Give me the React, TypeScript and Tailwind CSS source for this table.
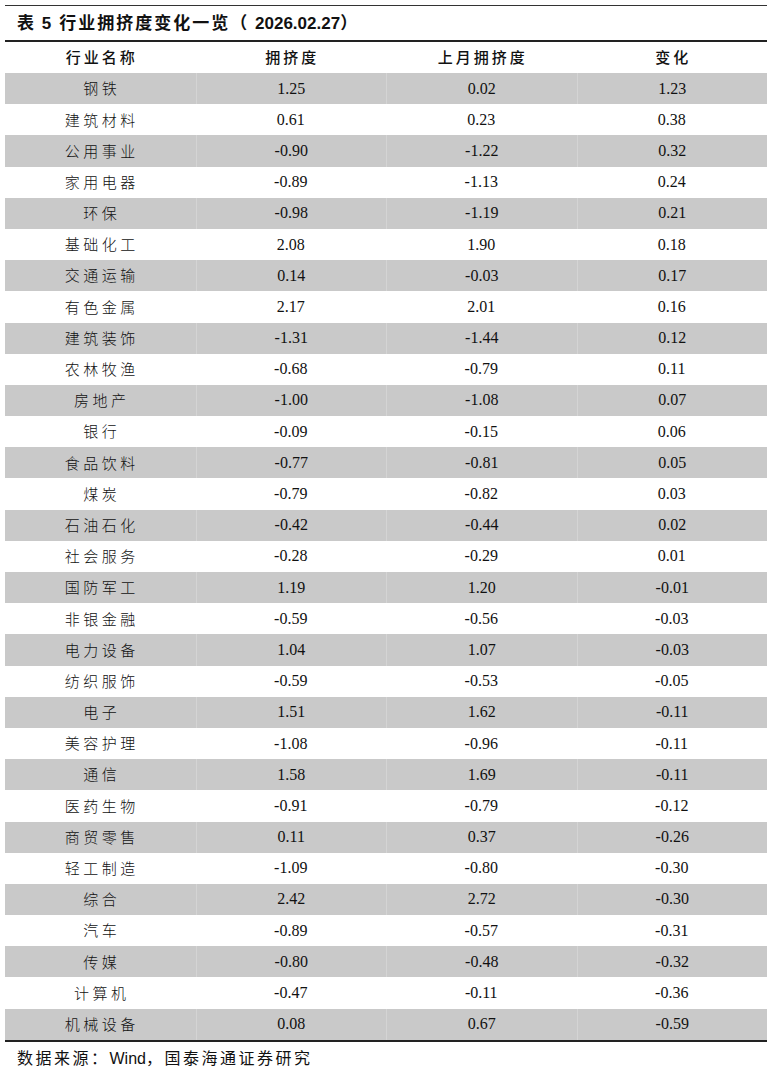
const rows: [string, string, string, string][] = [
  ['钢铁', '1.25', '0.02', '1.23'],
  ['建筑材料', '0.61', '0.23', '0.38'],
  ['公用事业', '-0.90', '-1.22', '0.32'],
  ['家用电器', '-0.89', '-1.13', '0.24'],
  ['环保', '-0.98', '-1.19', '0.21'],
  ['基础化工', '2.08', '1.90', '0.18'],
  ['交通运输', '0.14', '-0.03', '0.17'],
  ['有色金属', '2.17', '2.01', '0.16'],
  ['建筑装饰', '-1.31', '-1.44', '0.12'],
  ['农林牧渔', '-0.68', '-0.79', '0.11'],
  ['房地产', '-1.00', '-1.08', '0.07'],
  ['银行', '-0.09', '-0.15', '0.06'],
  ['食品饮料', '-0.77', '-0.81', '0.05'],
  ['煤炭', '-0.79', '-0.82', '0.03'],
  ['石油石化', '-0.42', '-0.44', '0.02'],
  ['社会服务', '-0.28', '-0.29', '0.01'],
  ['国防军工', '1.19', '1.20', '-0.01'],
  ['非银金融', '-0.59', '-0.56', '-0.03'],
  ['电力设备', '1.04', '1.07', '-0.03'],
  ['纺织服饰', '-0.59', '-0.53', '-0.05'],
  ['电子', '1.51', '1.62', '-0.11'],
  ['美容护理', '-1.08', '-0.96', '-0.11'],
  ['通信', '1.58', '1.69', '-0.11'],
  ['医药生物', '-0.91', '-0.79', '-0.12'],
  ['商贸零售', '0.11', '0.37', '-0.26'],
  ['轻工制造', '-1.09', '-0.80', '-0.30'],
  ['综合', '2.42', '2.72', '-0.30'],
  ['汽车', '-0.89', '-0.57', '-0.31'],
  ['传媒', '-0.80', '-0.48', '-0.32'],
  ['计算机', '-0.47', '-0.11', '-0.36'],
  ['机械设备', '0.08', '0.67', '-0.59'],
]

const cjk = "font-['Noto_Sans_CJK_SC',sans-serif]"
const num = "font-['Liberation_Serif','Noto_Sans_CJK_SC',serif]"
const latin = "font-['Liberation_Sans',sans-serif]"

export default function App() {
  return (
    <div className="w-[772px] h-[1070px] bg-white text-[#111] pt-[5px]">
      <div className="mx-[5px]">
        <div className="border-t-[1.5px] border-[#333] h-[35px] flex items-center pl-[12px]">
          <h1 className={`text-[17px] font-bold ${cjk} tracking-[2px] whitespace-pre`}>
            表 <span className={latin}>5</span> 行业拥挤度变化一览（ <span className={`${latin} tracking-normal`}>2026.02.27</span>）
          </h1>
        </div>
        <div className="border-t-2 border-b-2 border-[#222]">
          <div className="grid grid-cols-4 h-[31px] items-center text-center">
            {['行业名称', '拥挤度', '上月拥挤度', '变化'].map((h) => (
              <div key={h} className={`${cjk} text-[15px] font-medium tracking-[3px] pl-[3px]`}>
                {h}
              </div>
            ))}
          </div>
          {rows.map((r, i) => (
            <div
              key={r[0]}
              className={`grid grid-cols-4 h-[31.2px] items-center text-center ${i % 2 === 0 ? 'bg-[#c9c9c9]' : 'bg-white'}`}
            >
              <div className={`${cjk} text-[15px] font-light tracking-[3.5px] pl-[3px] h-full flex items-center justify-center`}>
                {r[0]}
              </div>
              {r.slice(1).map((v, j) => (
                <div
                  key={j}
                  className={`${num} text-[16px] h-full flex items-center justify-center ${i % 2 === 0 ? 'border-l border-[#d4d4d4]' : ''}`}
                >
                  {v}
                </div>
              ))}
            </div>
          ))}
        </div>
        <div className={`${cjk} text-[16px] tracking-[2.5px] pl-[12px] pt-[3px] leading-[24px] whitespace-pre`}>
          数据来源：<span className={`${latin} tracking-normal`}>Wind</span>，国泰海通证券研究
        </div>
      </div>
    </div>
  )
}
